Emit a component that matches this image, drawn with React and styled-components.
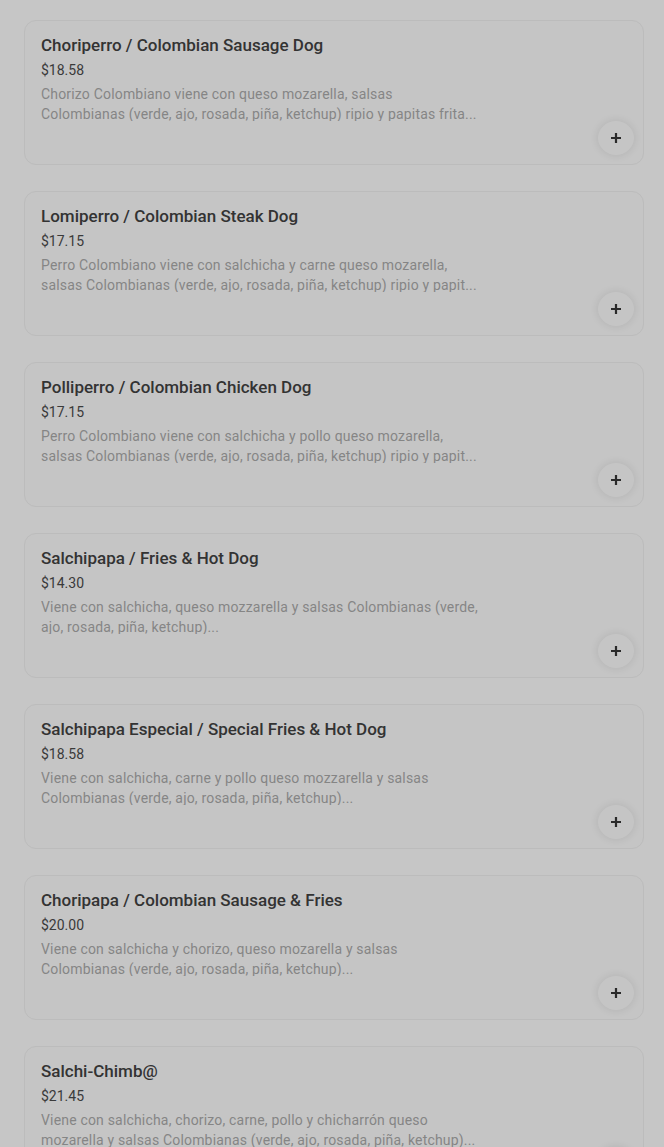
import React from "react";
import styled, { createGlobalStyle } from "styled-components";

const Global = createGlobalStyle`
  html, body { margin: 0; padding: 0; background: #c6c6c6; }
  body { font-family: Roboto, "Liberation Sans", sans-serif; }
  * { box-sizing: border-box; }
`;

const List = styled.div`
  display: flex;
  flex-direction: column;
  gap: 26px;
  padding: 20px 20px 0 24px;
`;

const Card = styled.div`
  display: flex;
  flex-direction: column;
  height: 145px;
  border: 1px solid #bcbcbc;
  border-radius: 12px;
  background: #c5c5c5;
  padding: 12px 9px 9px 16px;
`;

const Title = styled.div`
  font-size: 17px;
  font-weight: 500;
  line-height: 24px;
  color: #333333;
`;

const Price = styled.div`
  margin-top: 3px;
  font-size: 14px;
  line-height: 20px;
  color: #3a3a3a;
`;

const Desc = styled.div`
  margin-top: 4px;
  max-width: 438.5px;
  font-size: 14px;
  line-height: 20px;
  letter-spacing: 0.18px;
  color: #858585;
  display: -webkit-box;
  -webkit-line-clamp: 2;
  -webkit-box-orient: vertical;
  overflow: hidden;
`;

const AddButton = styled.button`
  margin-top: auto;
  align-self: flex-end;
  width: 36px;
  height: 36px;
  border: none;
  border-radius: 50%;
  background: #c5c5c5;
  box-shadow: 0 0 8px rgba(0, 0, 0, 0.1);
  display: flex;
  align-items: center;
  justify-content: center;
  padding: 0;
`;

const Plus = () => (
  <svg width="12" height="12" viewBox="0 0 12 12">
    <path d="M6 1v10M1 6h10" stroke="#2a2a2a" strokeWidth="2.2" />
  </svg>
);

const items = [
  {
    name: "Choriperro / Colombian Sausage Dog",
    price: "$18.58",
    desc: "Chorizo Colombiano viene con queso mozarella, salsas Colombianas (verde, ajo, rosada, piña, ketchup) ripio y papitas frita...",
  },
  {
    name: "Lomiperro / Colombian Steak Dog",
    price: "$17.15",
    desc: "Perro Colombiano viene con salchicha y carne queso mozarella, salsas Colombianas (verde, ajo, rosada, piña, ketchup) ripio y papit...",
  },
  {
    name: "Polliperro / Colombian Chicken Dog",
    price: "$17.15",
    desc: "Perro Colombiano viene con salchicha y pollo queso mozarella, salsas Colombianas (verde, ajo, rosada, piña, ketchup) ripio y papit...",
  },
  {
    name: "Salchipapa / Fries & Hot Dog",
    price: "$14.30",
    desc: "Viene con salchicha, queso mozzarella y salsas Colombianas (verde, ajo, rosada, piña, ketchup)...",
  },
  {
    name: "Salchipapa Especial / Special Fries & Hot Dog",
    price: "$18.58",
    desc: "Viene con salchicha, carne y pollo queso mozzarella y salsas Colombianas (verde, ajo, rosada, piña, ketchup)...",
  },
  {
    name: "Choripapa / Colombian Sausage & Fries",
    price: "$20.00",
    desc: "Viene con salchicha y chorizo, queso mozarella y salsas Colombianas (verde, ajo, rosada, piña, ketchup)...",
  },
  {
    name: "Salchi-Chimb@",
    price: "$21.45",
    desc: "Viene con salchicha, chorizo, carne, pollo y chicharrón queso mozarella y salsas Colombianas (verde, ajo, rosada, piña, ketchup)...",
  },
];

export default function App() {
  return (
    <>
      <Global />
      <List>
        {items.map((it) => (
          <Card key={it.name}>
            <Title>{it.name}</Title>
            <Price>{it.price}</Price>
            <Desc>{it.desc}</Desc>
            <AddButton aria-label="Add">
              <Plus />
            </AddButton>
          </Card>
        ))}
      </List>
    </>
  );
}
